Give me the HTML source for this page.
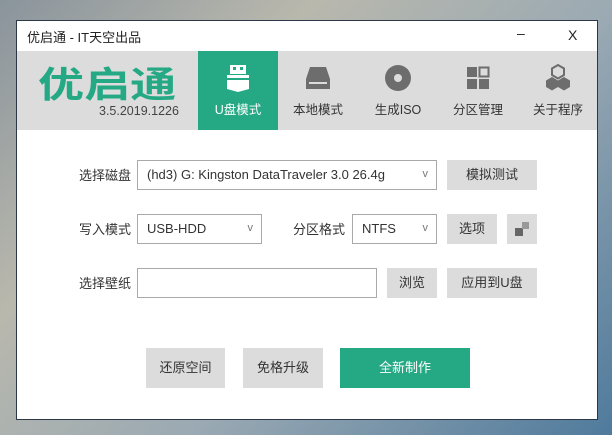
<!DOCTYPE html>
<html><head><meta charset="utf-8"><style>
*{margin:0;padding:0;box-sizing:border-box}
body{width:612px;height:435px;overflow:hidden;position:relative;font-family:"Liberation Sans","Noto Sans CJK SC",sans-serif;background:linear-gradient(135deg,#8a949c 0%,#b9b8ad 30%,#9aa9b3 60%,#4f7a9c 100%)}
.win{position:absolute;left:16px;top:20px;width:582px;height:400px;background:#fff;border:1px solid #2c3846}
.tb{position:absolute;left:0;top:0;width:100%;height:30px;font-size:13px;color:#222}
.hd{position:absolute;left:0;top:30px;width:100%;height:79px;background:#dcdcdc}
.abs{position:absolute}
.tab{position:absolute;top:0;width:80px;height:79px;text-align:center;font-size:12.5px;color:#333}
.tab .l{position:absolute;top:48px;width:100%;left:0}
.tab svg{position:absolute;left:25px;top:12px}
.act{background:#25a985;color:#fff}
.lbl{position:absolute;font-size:13px;color:#333}
.box{position:absolute;border:1px solid #a9a9a9;background:#fff;font-size:13px;color:#333;padding-left:9px;line-height:27px}
.box .v{position:absolute;right:8px;top:0;color:#777;font-size:11px}
.btn{position:absolute;background:#dcdcdc;font-size:13px;color:#333;text-align:center}
</style></head><body>
<div class="win">
 <div class="tb"><span class="abs" style="left:10px;top:6px">优启通 - IT天空出品</span><span class="abs" style="left:500px;top:4px;font-size:14px">–</span><span class="abs" style="left:551px;top:6px;font-size:14px">X</span></div>
 <div class="hd">
  <div class="abs" style="left:21px;top:14px;font-size:36px;font-weight:bold;color:#25a985;line-height:40px;transform:scaleX(1.28);transform-origin:left top;white-space:nowrap">优启通</div>
  <div class="abs" style="left:82px;top:53px;font-size:12.5px;color:#444">3.5.2019.1226</div>
  <div class="tab act" style="left:181px"><svg width="30" height="30" viewBox="0 0 30 30"><rect x="7" y="2" width="16" height="9" fill="#fff"/><rect x="10" y="4" width="3" height="3" fill="#25a985"/><rect x="17" y="4" width="3" height="3" fill="#25a985"/><rect x="4" y="12" width="22" height="3" fill="#fff"/><path d="M4 17H26V26L15 29L4 26Z" fill="#fff"/></svg><div class="l">U盘模式</div></div>
  <div class="tab" style="left:261px"><svg width="30" height="30" viewBox="0 0 30 30"><path d="M7 4H23L27 16V26H3V16Z" fill="#6d6d6d"/><rect x="6" y="19" width="18" height="2" fill="#dcdcdc"/></svg><div class="l">本地模式</div></div>
  <div class="tab" style="left:341px"><svg width="30" height="30" viewBox="0 0 30 30"><circle cx="15" cy="15" r="13" fill="#6d6d6d"/><circle cx="15" cy="15" r="4" fill="#dcdcdc"/></svg><div class="l">生成ISO</div></div>
  <div class="tab" style="left:421px"><svg width="30" height="30" viewBox="0 0 30 30"><rect x="4" y="4" width="10" height="10" fill="#6d6d6d"/><rect x="16.5" y="4.5" width="9" height="9" fill="none" stroke="#6d6d6d" stroke-width="2"/><rect x="4" y="16" width="10" height="10" fill="#6d6d6d"/><rect x="16" y="16" width="10" height="10" fill="#6d6d6d"/></svg><div class="l">分区管理</div></div>
  <div class="tab" style="left:501px"><svg width="30" height="30" viewBox="0 0 30 30"><path d="M15 2L21 5.5V12L15 15.5L9 12V5.5Z" fill="none" stroke="#6d6d6d" stroke-width="2"/><path d="M9 14L15 17.5V24L9 27.5L3 24V17.5Z" fill="#6d6d6d"/><path d="M21 14L27 17.5V24L21 27.5L15 24V17.5Z" fill="#6d6d6d"/></svg><div class="l">关于程序</div></div>
 </div>
 <div class="lbl" style="left:62px;top:144px">选择磁盘</div>
 <div class="box" style="left:120px;top:139px;width:300px;height:30px">(hd3) G: Kingston DataTraveler 3.0 26.4g<span class="v">v</span></div>
 <div class="btn" style="left:430px;top:139px;width:90px;height:30px;line-height:30px">模拟测试</div>
 <div class="lbl" style="left:62px;top:198px">写入模式</div>
 <div class="box" style="left:120px;top:193px;width:125px;height:30px">USB-HDD<span class="v">v</span></div>
 <div class="lbl" style="left:276px;top:198px">分区格式</div>
 <div class="box" style="left:335px;top:193px;width:85px;height:30px">NTFS<span class="v">v</span></div>
 <div class="btn" style="left:430px;top:193px;width:50px;height:30px;line-height:30px">选项</div>
 <div class="btn" style="left:490px;top:193px;width:30px;height:30px"><div class="abs" style="left:8px;top:14px;width:8px;height:8px;background:#666"></div><div class="abs" style="left:15px;top:8px;width:7px;height:7px;background:#999"></div></div>
 <div class="lbl" style="left:62px;top:252px">选择壁纸</div>
 <div class="box" style="left:120px;top:247px;width:240px;height:30px"></div>
 <div class="btn" style="left:370px;top:247px;width:50px;height:30px;line-height:30px">浏览</div>
 <div class="btn" style="left:430px;top:247px;width:90px;height:30px;line-height:30px">应用到U盘</div>
 <div class="btn" style="left:129px;top:327px;width:79px;height:40px;line-height:40px">还原空间</div>
 <div class="btn" style="left:226px;top:327px;width:80px;height:40px;line-height:40px">免格升级</div>
 <div class="btn" style="left:323px;top:327px;width:130px;height:40px;line-height:40px;background:#25a985;color:#fff">全新制作</div>
</div>
</body></html>
